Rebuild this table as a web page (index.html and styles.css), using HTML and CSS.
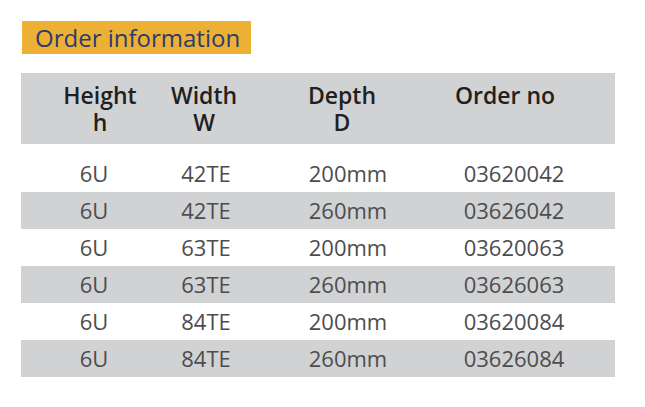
FILE: index.html
```html
<!DOCTYPE html>
<html>
<head>
<meta charset="utf-8">
<link rel="stylesheet" href="styles.css">
</head>
<body>
<div class="page">
  <div class="title">Order information</div>
  <div class="table">
    <div class="head">
      <div>Height<br>h</div>
      <div>Width<br>W</div>
      <div>Depth<br>D</div>
      <div>Order no</div>
    </div>
    <div class="body">
      <div class="row"><div>6U</div><div>42TE</div><div>200mm</div><div>03620042</div></div>
      <div class="row alt"><div>6U</div><div>42TE</div><div>260mm</div><div>03626042</div></div>
      <div class="row"><div>6U</div><div>63TE</div><div>200mm</div><div>03620063</div></div>
      <div class="row alt"><div>6U</div><div>63TE</div><div>260mm</div><div>03626063</div></div>
      <div class="row"><div>6U</div><div>84TE</div><div>200mm</div><div>03620084</div></div>
      <div class="row alt"><div>6U</div><div>84TE</div><div>260mm</div><div>03626084</div></div>
    </div>
  </div>
</div>
</body>
</html>
```

FILE: styles.css
```css
html, body {
  margin: 0;
  padding: 0;
  background: #ffffff;
}
.page {
  padding: 21px 0 0 21px;
  font-family: "Open Sans", "Noto Sans", sans-serif;
}
.title {
  display: inline-block;
  margin-left: 1px;
  height: 33px;
  width: 216px;
  padding-left: 13px;
  background: #ecb035;
  color: #2c3b70;
  font-size: 24px;
  line-height: 33px;
}
.table {
  margin-top: 19px;
  width: 594px;
}
.head {
  display: grid;
  grid-template-columns: 120px 88px 188px 138px;
  padding: 9px 0 8px 19px;
  background: #d1d2d4;
  color: #231f20;
  font-weight: 600;
  font-size: 23px;
  line-height: 27px;
  text-align: center;
}
.body {
  padding-top: 11px;
}
.row {
  display: grid;
  grid-template-columns: 108px 116px 168px 164px;
  padding-left: 19px;
  height: 37px;
  color: #4d4d4f;
  font-size: 22px;
  font-weight: 500;
  line-height: 37px;
  text-align: center;
}
.row.alt {
  background: #d1d2d4;
}
```
